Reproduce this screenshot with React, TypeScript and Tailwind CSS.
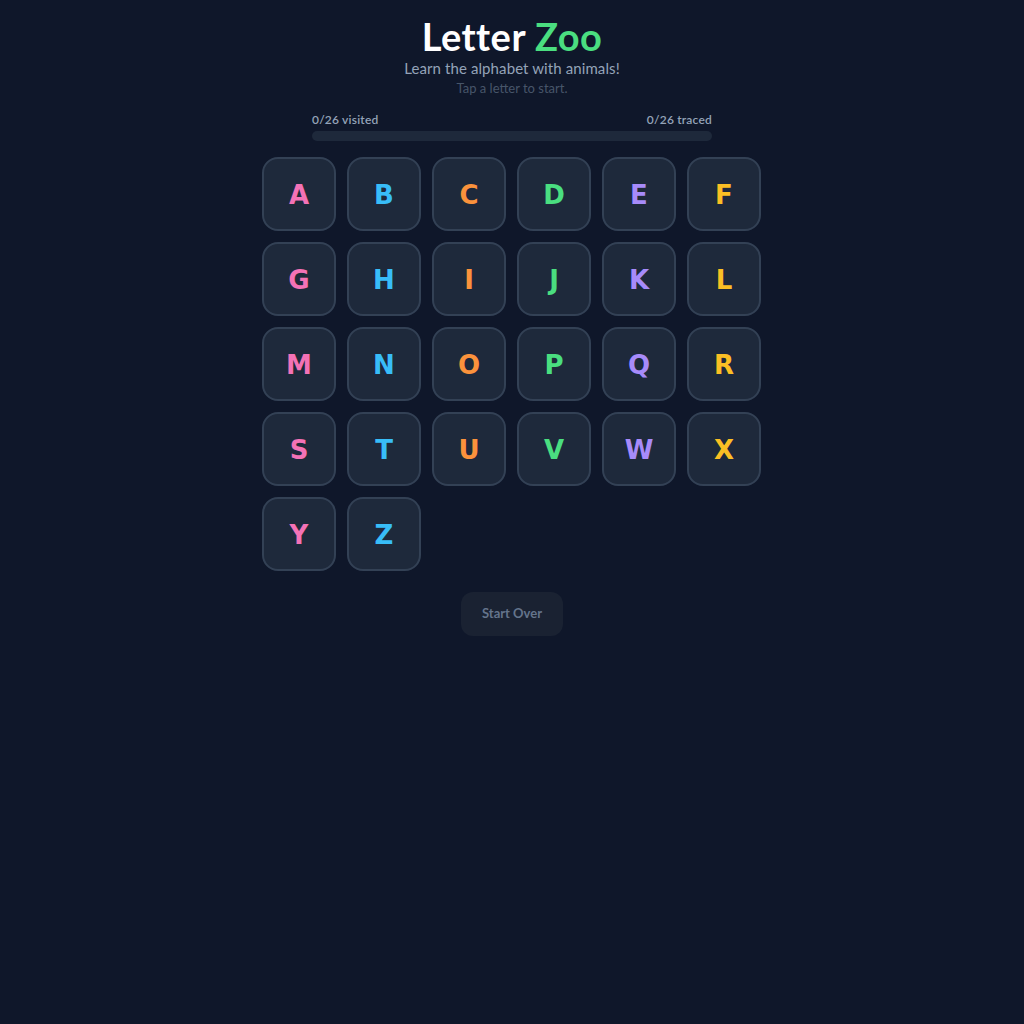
const LETTERS = 'ABCDEFGHIJKLMNOPQRSTUVWXYZ'.split('');

const COLORS = [
  'text-[#f472b6]',
  'text-[#38bdf8]',
  'text-[#fb923c]',
  'text-[#4ade80]',
  'text-[#a78bfa]',
  'text-[#fbbf24]',
];

export default function App() {
  return (
    <div className="min-h-screen bg-[#0f172a] font-['Lato',sans-serif]">
      <div className="mx-auto flex max-w-[500px] flex-col items-center pt-[15px]">
        {/* Header */}
        <h1 className="text-[38px] font-bold leading-[42px] tracking-[0.5px] text-white">
          Letter <span className="text-[#4ade80]">Zoo</span>
        </h1>
        <p className="mt-[1px] text-[15px] leading-5 tracking-[0.1px] text-[#94a3b8]">Learn the alphabet with animals!</p>
        <p className="text-[13px] leading-5 text-[#475569]">Tap a letter to start.</p>

        {/* Progress */}
        <div className="mt-[14px] w-[400px]">
          <div className="flex justify-between text-xs font-semibold leading-4 tracking-[0.2px] text-[#94a3b8]">
            <span>0/26 visited</span>
            <span>0/26 traced</span>
          </div>
          <div className="mt-[3px] h-[10px] rounded-full bg-[#1e293b]" />
        </div>

        {/* Letter grid */}
        <div className="mt-4 mr-[1px] grid grid-cols-6 gap-[11px]">
          {LETTERS.map((l, i) => (
            <button
              key={l}
              className={`flex h-[74px] w-[74px] items-center justify-center rounded-2xl border-2 border-[#334155] bg-[#1e293b] pt-[3px] font-['Comic_Sans_MS','DejaVu_Sans',sans-serif] text-[26px] font-bold ${COLORS[i % 6]}`}
            >
              {l}
            </button>
          ))}
        </div>

        <button className="mt-[21px] h-[44px] w-[102px] rounded-xl bg-[#1a2232] text-[13px] font-bold text-[#64748b]">
          Start Over
        </button>
      </div>
    </div>
  );
}
